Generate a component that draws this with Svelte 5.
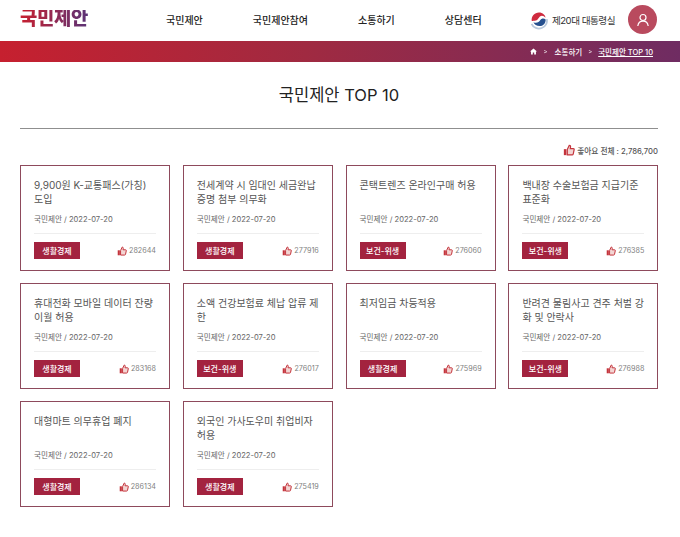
<script>
  const cards = [
    { t: '9,900원 K-교통패스(가칭) 도입', c: '생활경제', n: 282644 },
    { t: '전세계약 시 임대인 세금완납 증명 첨부 의무화', c: '생활경제', n: 277916 },
    { t: '콘택트렌즈 온라인구매 허용', c: '보건-위생', n: 276060 },
    { t: '백내장 수술보험금 지급기준 표준화', c: '보건-위생', n: 276385 },
    { t: '휴대전화 모바일 데이터 잔량 이월 허용', c: '생활경제', n: 283168 },
    { t: '소액 건강보험료 체납 압류 제한', c: '보건-위생', n: 276017 },
    { t: '최저임금 차등적용', c: '생활경제', n: 275969 },
    { t: '반려견 물림사고 견주 처벌 강화 및 안락사', c: '보건-위생', n: 276988 },
    { t: '대형마트 의무휴업 폐지', c: '생활경제', n: 286134 },
    { t: '외국인 가사도우미 취업비자 허용', c: '생활경제', n: 275419 }
  ];
  const hand = 'M5 6.300 7.300 1.500c1 0 1.700.8 1.500 1.900L8.500 5.300H12c.8 0 1.200.6 1 1.300l-1.100 5.200c-.2.6-.6.9-1.200.9H5z';
</script>

<div class="page">
  <header class="header">
    <div class="logo">국민제안</div>
    <nav class="nav">
      <span>국민제안</span><span>국민제안참여</span><span>소통하기</span><span>상담센터</span>
    </nav>
    <div class="right">
      <svg class="emblem" width="20" height="20" viewBox="0 0 18 18" fill="none">
        <path d="M2.300 12.500C3.800 16 8 17.500 11.500 16.200c3.500-1.300 5.300-4.700 4.500-8" stroke="#b9c9dc" stroke-width="1.600" />
        <path d="M2.500 10C1.800 5.800 5 2.200 9 2.200c3.300 0 5.800 2.300 5.800 4.800-1.300-2-3.500-2.500-5-1.200C8.500 7 8 9 6.200 9.500 4.800 9.900 3.200 9.700 2.500 10z" fill="#cf2b3f" />
        <path d="M15 8.500c.2 3.300-2.300 6-5.500 6-2.600 0-4.800-1.500-5.500-3.500 1.500.7 3.200.7 4.500-.2 1.300-.9 1.800-2.600 3.200-3 1.300-.3 2.500 0 3.300.7z" fill="#26508f" />
      </svg>
      <span class="office">제20대 대통령실</span>
      <div class="avatar">
        <svg width="14" height="14" viewBox="0 0 14 14" fill="none" stroke="#fff" stroke-width="1.200">
          <circle cx="7" cy="4.500" r="3" />
          <path d="M1.800 13c.4-3 2.500-4.800 5.200-4.800s4.800 1.800 5.200 4.800" />
        </svg>
      </div>
    </div>
  </header>

  <div class="bar">
    <svg width="7" height="7" viewBox="0 0 8 8" fill="#fff"><path d="M4 .5 0 4h1.200v3.500h2V5.200h1.600v2.300h2V4H8z" /></svg>
    <span class="sep first">&gt;</span>
    <span>소통하기</span>
    <span class="sep">&gt;</span>
    <span class="current">국민제안 TOP 10</span>
  </div>

  <main class="main">
    <h1 class="title">국민제안 TOP 10</h1>
    <div class="total">
      <svg width="12" height="12" viewBox="0 0 14 14"><rect x="1" y="6" width="3" height="7" fill="#c4343c" /><path d={hand} fill="#f3d5d3" stroke="#c4343c" stroke-width="1.400" /></svg>
      <span>좋아요 전체 : 2,786,700</span>
    </div>
    <div class="grid">
      {#each cards as card}
        <article class="card">
          <h2 class="card-title">{card.t}</h2>
          <p class="meta">국민제안 / 2022-07-20</p>
          <div class="foot">
            <span class="tag">{card.c}</span>
            <span class="likes">
              <svg width="10" height="10" viewBox="0 0 14 14"><rect x="1" y="6" width="3" height="7" fill="#c4343c" /><path d={hand} fill="#f3d5d3" stroke="#c4343c" stroke-width="1.400" /></svg>
              {card.n}
            </span>
          </div>
        </article>
      {/each}
    </div>
  </main>
</div>

<style>
  :global(body) {
    margin: 0;
    background: #fff;
  }
  .page {
    width: 680px;
    height: 537px;
    overflow: hidden;
    font-family: Inter, "Noto Sans CJK KR", "Noto Sans", sans-serif;
    color: #333;
  }
  .header {
    height: 41px;
    box-sizing: border-box;
    padding-bottom: 2px;
    display: flex;
    align-items: center;
  }
  .logo {
    width: 68px;
    margin-left: 20px;
    font-size: 18.800px;
    font-weight: 900;
    letter-spacing: -0.300px;
    line-height: 1;
    white-space: nowrap;
    background: linear-gradient(90deg, #c8202f, #5b3377);
    background-clip: text;
    -webkit-background-clip: text;
    color: transparent;
  }
  .nav {
    display: flex;
    gap: 50px;
    margin-left: 78px;
    font-size: 10px;
    font-weight: 500;
    color: #222;
  }
  .right {
    margin-left: auto;
    display: flex;
    align-items: center;
    padding-right: 23px;
  }
  .office {
    font-size: 9.600px;
    color: #333;
    margin-left: 3px;
    letter-spacing: -0.500px;
  }
  .avatar {
    width: 29px;
    height: 29px;
    border-radius: 50%;
    background: #b94a5e;
    margin-left: 13px;
    display: flex;
    align-items: center;
    justify-content: center;
  }
  .bar {
    height: 21px;
    background: linear-gradient(90deg, #c6202f 0%, #a02a41 45%, #6f2c62 100%);
    color: #fff;
    font-size: 7.500px;
    font-weight: 500;
    display: flex;
    align-items: center;
    justify-content: flex-end;
    gap: 6px;
    padding-right: 27px;
  }
  .sep {
    font-size: 6px;
    opacity: 0.85;
  }
  .sep.first {
    margin: 0 1px;
  }
  .current {
    text-decoration: underline;
  }
  .main {
    padding: 0 22px 0 20px;
  }
  .title {
    margin: 0;
    height: 67px;
    box-sizing: border-box;
    border-bottom: 1px solid #8f8f8f;
    text-align: center;
    font-size: 16.500px;
    font-weight: 400;
    line-height: 67px;
    color: #222;
  }
  .total {
    height: 36px;
    display: flex;
    align-items: center;
    justify-content: flex-end;
    gap: 2px;
    font-size: 7.700px;
    font-weight: 500;
    color: #555;
    padding-top: 6px;
    box-sizing: border-box;
  }
  .grid {
    display: grid;
    grid-template-columns: repeat(4, 150px);
    column-gap: 12.800px;
    row-gap: 12px;
  }
  .card {
    height: 106px;
    box-sizing: border-box;
    border: 1px solid #8e4a5c;
    padding: 12px 13px 0;
    display: flex;
    flex-direction: column;
    background: #fff;
  }
  .card-title {
    margin: 0;
    height: 36px;
    font-size: 10px;
    font-weight: 400;
    line-height: 14px;
    color: #555;
  }
  .meta {
    margin: 0;
    font-size: 7.600px;
    line-height: 12px;
    height: 19px;
    color: #666;
  }
  .foot {
    border-top: 1px solid #eee;
    padding-top: 8px;
    display: flex;
    align-items: center;
    justify-content: space-between;
  }
  .tag {
    background: #a3233f;
    color: #fff;
    font-size: 8px;
    font-weight: 500;
    width: 46px;
    height: 17px;
    display: flex;
    align-items: center;
    justify-content: center;
  }
  .likes {
    display: flex;
    align-items: center;
    gap: 2px;
    font-size: 7.200px;
    color: #808080;
  }
</style>
